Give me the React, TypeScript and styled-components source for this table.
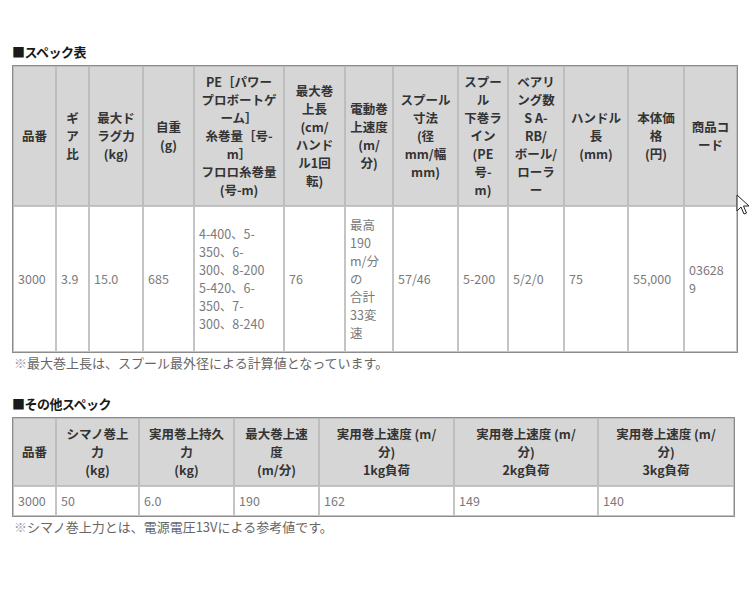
import React from "react";
import styled, { createGlobalStyle } from "styled-components";

const GlobalStyle = createGlobalStyle`
  body {
    margin: 0;
    background: #fff;
    font-family: "Noto Sans CJK JP", "Noto Sans", sans-serif;
  }
`;

const specCols = [43, 33, 54, 51, 90, 61, 48, 65, 50, 56, 64, 56, 53];

const specHead = [
    "品番",
    "ギ\nア\n比",
    "最大ド\nラグ力\n(kg)",
    "自重\n(g)",
    "PE［パワー\nプロボートゲ\nーム］\n糸巻量［号-\nm］\nフロロ糸巻量\n(号-m)",
    "最大巻\n上長\n(cm/\nハンド\nル1回\n転)",
    "電動巻\n上速度\n(m/\n分)",
    "スプール\n寸法\n(径\nmm/幅\nmm)",
    "スプー\nル\n下巻ラ\nイン\n(PE\n号-\nm)",
    "ベアリ\nング数\nS A-\nRB/\nボール/\nローラ\nー",
    "ハンドル\n長\n(mm)",
    "本体価\n格\n(円)",
    "商品コ\nード",
];

const specBody = [
    "3000",
    "3.9",
    "15.0",
    "685",
    "4-400、5-\n350、6-\n300、8-200\n5-420、6-\n350、7-\n300、8-240",
    "76",
    "最高\n190\nm/分\nの\n合計\n33変\n速",
    "57/46",
    "5-200",
    "5/2/0",
    "75",
    "55,000",
    "03628\n9",
];

const otherCols = [43, 83, 95, 85, 135, 144, 136];

const otherHead = [
    "品番",
    "シマノ巻上\n力\n(kg)",
    "実用巻上持久\n力\n(kg)",
    "最大巻上速\n度\n(m/分)",
    "実用巻上速度 (m/\n分)\n1kg負荷",
    "実用巻上速度 (m/\n分)\n2kg負荷",
    "実用巻上速度 (m/\n分)\n3kg負荷",
];

const otherBody = ["3000", "50", "6.0", "190", "162", "149", "140"];

function Lines({ text }: { text: string }) {
    const parts = text.split("\n");
    return (
        <>
            {parts.map((p, i) => (
                <React.Fragment key={i}>
                    {p}
                    {i < parts.length - 1 && <br />}
                </React.Fragment>
            ))}
        </>
    );
}

export default function App() {
    return (
        <Page>
            <GlobalStyle />
            <Title>■スペック表</Title>
            <Table $width={725}>
                <colgroup>
                    {specCols.map((w, i) => (
                        <col key={i} style={{ width: w }} />
                    ))}
                </colgroup>
                <thead>
                    <tr>
                        {specHead.map((t, i) => (
                            <Th key={i} $h={138}>
                                <Lines text={t} />
                            </Th>
                        ))}
                    </tr>
                </thead>
                <tbody>
                    <tr>
                        {specBody.map((t, i) => (
                            <Td key={i} $h={144}>
                                <Lines text={t} />
                            </Td>
                        ))}
                    </tr>
                </tbody>
            </Table>
            <Note>
                <Mark>※</Mark>最大巻上長は、スプール最外径による計算値となっています。
            </Note>

            <Title $gap={23}>■その他スペック</Title>
            <Table $width={722}>
                <colgroup>
                    {otherCols.map((w, i) => (
                        <col key={i} style={{ width: w }} />
                    ))}
                </colgroup>
                <thead>
                    <tr>
                        {otherHead.map((t, i) => (
                            <Th key={i} $h={66}>
                                <Lines text={t} />
                            </Th>
                        ))}
                    </tr>
                </thead>
                <tbody>
                    <tr>
                        {otherBody.map((t, i) => (
                            <Td key={i} $h={28}>
                                {t}
                            </Td>
                        ))}
                    </tr>
                </tbody>
            </Table>
            <Note>
                <Mark>※</Mark>シマノ巻上力とは、電源電圧13Vによる参考値です。
            </Note>

            <Cursor width="14" height="22" viewBox="0 0 14 22">
                <path d="M1 1 L1 17 L5 13 L8 20 L10.5 19 L7.5 12 L13 12 Z" fill="#fff" stroke="#222" strokeWidth="1" strokeLinejoin="round" />
            </Cursor>
        </Page>
    );
}

const Page = styled.div`
    position: relative;
    padding: 43px 0 0 12px;
`;

const Title = styled.h2<{ $gap?: number }>`
    margin: ${p => p.$gap ?? 0}px 0 4px;
    font-size: 13px;
    line-height: 18px;
    font-weight: bold;
    color: #1a1a1a;
    letter-spacing: -0.5px;
`;

const Table = styled.table<{ $width: number }>`
    width: ${p => p.$width}px;
    table-layout: fixed;
    border-collapse: separate;
    border-spacing: 0;
    border: 1px solid #8c8c8c;
    font-size: 12.5px;
    line-height: 18px;
`;

const Th = styled.th<{ $h: number }>`
    height: ${p => p.$h}px;
    padding: 0 2px;
    background: #d6d6d6;
    border: 1px solid #bdbdbd;
    color: #333;
    font-weight: bold;
    text-align: center;
    vertical-align: middle;
    white-space: nowrap;
    overflow: hidden;
`;

const Td = styled.td<{ $h: number }>`
    height: ${p => p.$h}px;
    padding: 0 4px;
    background: #fff;
    border: 1px solid #c4c4c4;
    color: #7a7a7a;
    text-align: left;
    vertical-align: middle;
    white-space: nowrap;
    overflow: hidden;
`;

const Note = styled.p`
    margin: 1px 0 0 2px;
    font-size: 13px;
    line-height: 18px;
    color: #666;
`;

const Mark = styled.span`
    color: #a89ab8;
`;

const Cursor = styled.svg`
    position: absolute;
    left: 736px;
    top: 194px;
`;
